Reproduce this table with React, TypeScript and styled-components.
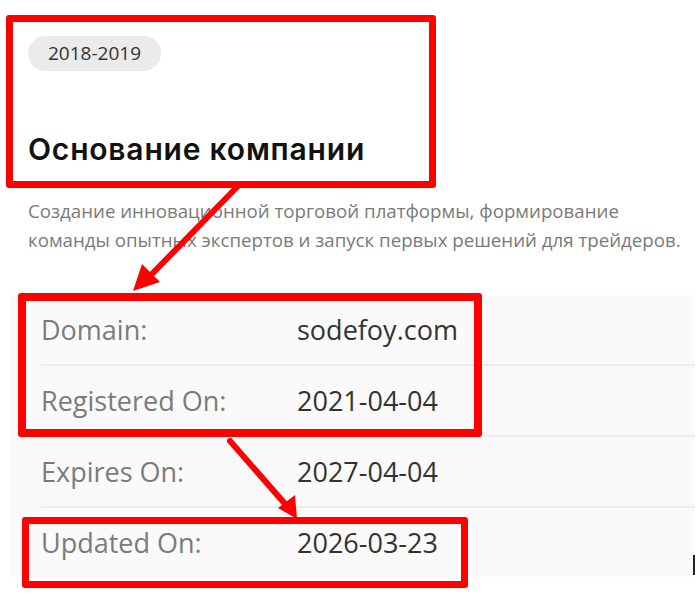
import React from "react";
import styled, { createGlobalStyle } from "styled-components";

const GlobalStyle = createGlobalStyle`
  html, body { margin: 0; padding: 0; background: #ffffff; }
  body { font-family: "Open Sans", "Noto Sans", sans-serif; }
  * { box-sizing: border-box; }
`;

const Page = styled.div`
  position: relative;
  width: 700px;
  height: 603px;
  overflow: hidden;
  padding: 36px 5px 0 11px;
`;

const Header = styled.header`
  padding-left: 17px;
  display: flex;
  flex-direction: column;
  align-items: flex-start;
`;

const Pill = styled.span`
  display: inline-flex;
  align-items: center;
  justify-content: center;
  height: 35px;
  padding: 0 20px;
  border-radius: 18px;
  background: #ebebeb;
  color: #333333;
  font-family: "Open Sans", sans-serif;
  font-size: 19px;
  line-height: 1;
`;

const Title = styled.h2`
  margin: 60px 0 0;
  font-family: Inter, "Noto Sans", sans-serif;
  font-weight: 600;
  font-size: 30px;
  line-height: 36px;
  color: #111111;
  letter-spacing: 0.8px;
`;

const Description = styled.p`
  margin: 29px 0 0;
  font-family: "Open Sans", sans-serif;
  font-size: 18.7px;
  line-height: 29px;
  color: #7a7a7a;
  white-space: nowrap;
`;

const Table = styled.div`
  margin-top: 41px;
  background: #fafafa;
  padding-left: 30px;
  width: 684px;
`;

const Row = styled.div<{ $last?: boolean }>`
  display: grid;
  grid-template-columns: 256px 1fr;
  align-items: center;
  height: ${(p) => (p.$last ? "69px" : "71px")};
  border-bottom: ${(p) => (p.$last ? "none" : "2px solid #ececec")};
  font-family: "Open Sans", sans-serif;
  font-size: 27px;
  line-height: 1;
`;

const Label = styled.span`
  color: #7b7b7b;
`;

const Value = styled.span`
  color: #333333;
`;

const Callout = styled.div<{ $x: number; $y: number; $w: number; $h: number; $t: number }>`
  position: absolute;
  left: ${(p) => p.$x}px;
  top: ${(p) => p.$y}px;
  width: ${(p) => p.$w}px;
  height: ${(p) => p.$h}px;
  border: ${(p) => p.$t}px solid #ff0000;
  border-radius: 3px;
  pointer-events: none;
`;

const Arrows = styled.svg`
  position: absolute;
  inset: 0;
  pointer-events: none;
`;

const Caret = styled.div`
  position: absolute;
  left: 693px;
  top: 555px;
  width: 2px;
  height: 20px;
  background: #222222;
`;

const rows = [
  { label: "Domain:", value: "sodefoy.com" },
  { label: "Registered On:", value: "2021-04-04" },
  { label: "Expires On:", value: "2027-04-04" },
  { label: "Updated On:", value: "2026-03-23" },
];

export default function App() {
  return (
    <>
      <GlobalStyle />
      <Page>
        <Header>
          <Pill>2018-2019</Pill>
          <Title>Основание компании</Title>
          <Description>
            Создание инновационной торговой платформы, формирование
            <br />
            команды опытных экспертов и запуск первых решений для трейдеров.
          </Description>
        </Header>
        <Table>
          {rows.map((r, i) => (
            <Row key={r.label} $last={i === rows.length - 1}>
              <Label>{r.label}</Label>
              <Value>{r.value}</Value>
            </Row>
          ))}
        </Table>

        <Callout $x={6} $y={15} $w={430} $h={173} $t={7} />
        <Callout $x={18} $y={293} $w={464} $h={144} $t={8} />
        <Callout $x={22} $y={517} $w={446} $h={71} $t={7} />

        <Arrows width="700" height="603" viewBox="0 0 700 603">
          <line x1="238" y1="186" x2="150" y2="276" stroke="#ff0000" strokeWidth="6" strokeLinecap="round" />
          <polygon points="133,291 142,264 160,282" fill="#ff0000" />
          <line x1="230" y1="441" x2="286" y2="505" stroke="#ff0000" strokeWidth="6" strokeLinecap="round" />
          <polygon points="297,519 278,508 295,495" fill="#ff0000" />
        </Arrows>
        <Caret />
      </Page>
    </>
  );
}
